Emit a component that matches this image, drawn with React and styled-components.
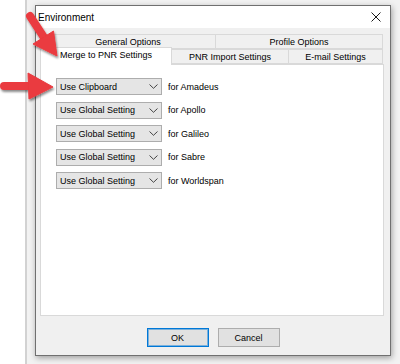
import React from "react";
import styled, { createGlobalStyle } from "styled-components";

const Global = createGlobalStyle`
  html, body { margin: 0; padding: 0; background: #f0f0f0; }
  body { font-family: "Liberation Sans", Arial, sans-serif; font-size: 9px; color: #000; }
  * { box-sizing: border-box; }
`;

const Page = styled.div`
  position: relative;
  width: 400px;
  height: 364px;
  display: flex;
  overflow: hidden;
  background: #f0f0f0;
`;

const BackWindow = styled.div`
  width: 27px;
  background: #ffffff;
  border-right: 2px solid #d2d2d2;
  flex: none;
`;

const Stage = styled.div`
  flex: 1;
  padding: 5px 7px 0 8px;
  background: #f2f2f2;
`;

const Dialog = styled.div`
  width: 356px;
  height: 351px;
  border: 1px solid #707070;
  background: #f0f0f0;
  box-shadow: 1px 2px 6px rgba(0, 0, 0, 0.35);
  display: flex;
  flex-direction: column;
`;

const TitleBar = styled.div`
  height: 22px;
  background: #ffffff;
  display: flex;
  align-items: center;
  justify-content: space-between;
  padding: 0 9px 0 2px;
  font-size: 10px;
`;

const Close = styled.svg`
  width: 10px;
  height: 10px;
  display: block;
`;

const TabControl = styled.div`
  margin: 6px 6px 0 4px;
  display: flex;
  flex-direction: column;
`;

const TabRow = styled.div`
  display: flex;
  height: 15px;
  align-items: flex-end;
`;

const Tab = styled.div`
  width: ${(p) => p.$w}px;
  height: ${(p) => (p.$active ? 18 : 15)}px;
  margin-bottom: ${(p) => (p.$active ? -1 : 0)}px;
  position: relative;
  z-index: ${(p) => (p.$active ? 2 : 1)};
  background: ${(p) => (p.$active ? "#ffffff" : "#f0f0f0")};
  border: 1px solid #d9d9d9;
  border-bottom: ${(p) => (p.$active ? "none" : "1px solid #d9d9d9")};
  margin-right: -1px;
  display: flex;
  align-items: center;
  justify-content: center;
  padding-bottom: ${(p) => (p.$active ? 3 : 0)}px;
  white-space: nowrap;
`;

const Panel = styled.div`
  height: 252px;
  background: #ffffff;
  border: 1px solid #d9d9d9;
  padding: 13px 0 0 15px;
  display: flex;
  flex-direction: column;
  gap: 6.5px;
`;

const Row = styled.div`
  display: flex;
  align-items: center;
  gap: 6px;
`;

const Combo = styled.div`
  width: 106px;
  height: 17px;
  border: 1px solid #adadad;
  background: #e5e5e5;
  display: flex;
  align-items: center;
  justify-content: space-between;
  padding: 0 3px 0 3px;
`;

const Chevron = styled.svg`
  width: 9px;
  height: 5px;
  display: block;
`;

const Footer = styled.div`
  display: flex;
  justify-content: center;
  gap: 9px;
  padding-top: 12px;
`;

const Button = styled.div`
  width: 62px;
  height: 19px;
  background: #e1e1e1;
  border: 1px solid ${(p) => (p.$default ? "#0078d7" : "#adadad")};
  box-shadow: ${(p) => (p.$default ? "inset 0 0 0 1px rgba(0,120,215,0.45)" : "none")};
  display: flex;
  align-items: center;
  justify-content: center;
`;

const Overlay = styled.svg`
  position: absolute;
  left: 0;
  top: 0;
  z-index: 10;
  width: 400px;
  height: 364px;
  pointer-events: none;
  overflow: visible;
`;

const rows = [
  ["Use Clipboard", "for Amadeus"],
  ["Use Global Setting", "for Apollo"],
  ["Use Global Setting", "for Galileo"],
  ["Use Global Setting", "for Sabre"],
  ["Use Global Setting", "for Worldspan"],
];

export default function App() {
  return (
    <>
      <Global />
      <Page>
        <BackWindow />
        <Stage>
          <Dialog>
            <TitleBar>
              <span>Environment</span>
              <Close viewBox="0 0 10 10">
                <path d="M0.5 0.5 L9.5 9.5 M9.5 0.5 L0.5 9.5" stroke="#1a1a1a" strokeWidth="1" fill="none" />
              </Close>
            </TitleBar>
            <TabControl>
              <TabRow>
                <Tab $w={176}>General Options</Tab>
                <Tab $w={168}>Profile Options</Tab>
              </TabRow>
              <TabRow>
                <Tab $w={132} $active>Merge to PNR Settings</Tab>
                <Tab $w={118}>PNR Import Settings</Tab>
                <Tab $w={95}>E-mail Settings</Tab>
              </TabRow>
              <Panel>
                {rows.map(([value, label]) => (
                  <Row key={label}>
                    <Combo>
                      <span>{value}</span>
                      <Chevron viewBox="0 0 9 5">
                        <path d="M0.5 0.5 L4.5 4.3 L8.5 0.5" stroke="#333" strokeWidth="0.9" fill="none" />
                      </Chevron>
                    </Combo>
                    <span>{label}</span>
                  </Row>
                ))}
              </Panel>
            </TabControl>
            <Footer>
              <Button $default>OK</Button>
              <Button>Cancel</Button>
            </Footer>
          </Dialog>
        </Stage>
        <Overlay viewBox="0 0 400 364">
          <defs>
            <filter id="sh" x="-50%" y="-50%" width="200%" height="200%">
              <feDropShadow dx="1" dy="2" stdDeviation="1.2" floodColor="#000" floodOpacity="0.45" />
            </filter>
          </defs>
          <g filter="url(#sh)" fill="#ea3a3f" stroke="#ea3a3f">
            <line x1="30" y1="16" x2="45" y2="39" strokeWidth="8" strokeLinecap="round" />
            <polygon points="57,56 53.5,31 33,44" strokeWidth="1" strokeLinejoin="round" />
            <line x1="4" y1="86" x2="31" y2="86" strokeWidth="8" strokeLinecap="round" />
            <polygon points="53,87 28,73 29,99" strokeWidth="1" strokeLinejoin="round" />
          </g>
        </Overlay>
      </Page>
    </>
  );
}
